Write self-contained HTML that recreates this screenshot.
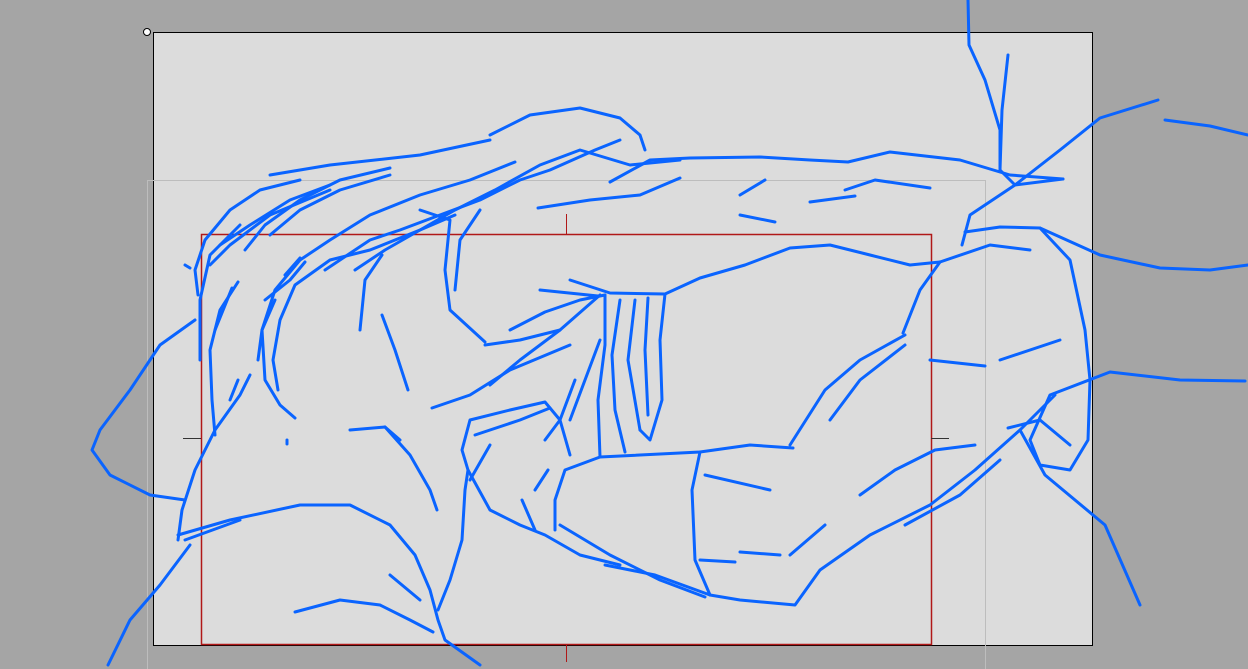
<!DOCTYPE html>
<html><head><meta charset="utf-8"><style>
html,body{margin:0;padding:0;width:1248px;height:669px;overflow:hidden;background:#a5a5a5;}
svg{display:block}
</style></head><body>
<svg width="1248" height="669" viewBox="0 0 1248 669" xmlns="http://www.w3.org/2000/svg">
<rect x="0" y="0" width="1248" height="669" fill="#a5a5a5"/>
<rect x="153.5" y="32.5" width="939" height="613" fill="#dcdcdc" stroke="#000" stroke-width="1"/>
<rect x="147.5" y="180.5" width="838" height="500" fill="none" stroke="#bdbdbd" stroke-width="1"/>
<rect x="201.5" y="234.5" width="730" height="410" fill="none" stroke="#b01818" stroke-width="1.5"/>
<g stroke="#b01818" stroke-width="1"><line x1="566.5" y1="214" x2="566.5" y2="234"/><line x1="566.5" y1="644" x2="566.5" y2="662"/></g>
<g stroke="#333" stroke-width="1"><line x1="183" y1="438.5" x2="201" y2="438.5"/><line x1="931" y1="438.5" x2="949" y2="438.5"/></g>
<circle cx="147" cy="32" r="3.5" fill="#fff" stroke="#000" stroke-width="1"/>
<g fill="none" stroke="#0a64ff" stroke-width="3" stroke-linecap="round" stroke-linejoin="round">
<path d="M968 0 L969 45 L985 80 L1000 130 L1000 170 L1015 185 L1063 179"/>
<path d="M1008 55 L1002 110 L1000 170"/>
<path d="M1158 100 L1100 118 L1060 150 L1015 185 L970 215 L962 245"/>
<path d="M1165 120 L1210 126 L1248 135"/>
<path d="M1040 228 L1100 255 L1160 268 L1210 270 L1248 265"/>
<path d="M965 232 L1000 227 L1040 228 L1070 260 L1085 330 L1090 380 L1088 440 L1070 470 L1040 465 L1030 440 L1050 395 L1110 372 L1180 380 L1245 381"/>
<path d="M1030 250 L990 245 L940 262 L910 265 L870 255 L830 245 L790 248 L745 265 L700 278 L665 294 L610 293 L570 280"/>
<path d="M940 262 L920 290 L903 333"/>
<path d="M1055 395 L1020 430 L1045 475 L1105 525 L1140 605"/>
<path d="M1040 420 L1008 428"/>
<path d="M1040 420 L1070 445"/>
<path d="M1060 340 L1000 360"/>
<path d="M930 360 L985 366"/>
<path d="M1020 430 L975 470 L930 505 L870 535 L820 570 L795 605 L740 600 L710 595 L655 575 L605 565"/>
<path d="M1000 460 L960 495 L905 525"/>
<path d="M975 445 L935 450 L895 470 L860 495"/>
<path d="M905 335 L860 360 L825 390 L790 445"/>
<path d="M905 345 L860 380 L830 420"/>
<path d="M793 448 L750 445 L700 452 L600 457 L565 470 L555 500 L555 530"/>
<path d="M700 452 L692 490 L695 560 L710 595"/>
<path d="M705 475 L770 490"/>
<path d="M825 525 L790 555"/>
<path d="M740 552 L780 555"/>
<path d="M700 560 L735 562"/>
<path d="M600 457 L598 400 L605 345 L605 295"/>
<path d="M620 300 L612 355 L615 410 L625 452"/>
<path d="M635 300 L628 360 L640 430"/>
<path d="M665 294 L660 340 L662 400 L650 440 L640 430"/>
<path d="M648 298 L645 350 L648 415"/>
<path d="M605 295 L580 300 L545 312 L510 330"/>
<path d="M600 295 L560 330 L520 360 L490 385"/>
<path d="M570 345 L510 370 L470 395 L432 408"/>
<path d="M600 340 L585 380 L570 420"/>
<path d="M575 380 L560 420 L545 440"/>
<path d="M540 290 L598 296"/>
<path d="M485 345 L520 340 L560 330"/>
<path d="M420 210 L450 220 L445 270 L450 310 L485 342"/>
<path d="M455 290 L460 240 L480 210"/>
<path d="M538 208 L590 200 L640 195 L680 178"/>
<path d="M610 182 L650 160 L690 158 L760 157 L810 160 L848 162 L890 152 L960 160 L1010 175 L1063 179"/>
<path d="M490 135 L530 115 L580 108 L620 118 L640 135 L645 150"/>
<path d="M270 175 L330 165 L420 155 L490 140"/>
<path d="M740 195 L765 180"/>
<path d="M740 215 L775 222"/>
<path d="M810 202 L855 196"/>
<path d="M845 190 L875 180 L930 188"/>
<path d="M620 140 L595 150 L550 170 L520 180 L480 200 L440 215 L400 230 L370 240 L325 270"/>
<path d="M680 160 L630 165 L580 150 L540 165 L495 190 L455 210 L420 230 L385 250 L355 270"/>
<path d="M515 162 L470 180 L420 195 L370 215 L330 240 L300 260 L275 290 L262 330 L265 380 L280 405 L295 418"/>
<path d="M455 215 L420 230 L370 250 L330 260 L295 285 L280 320 L273 360 L278 390"/>
<path d="M390 168 L340 180 L300 200 L265 225 L245 250"/>
<path d="M330 185 L290 200 L250 225 L220 245"/>
<path d="M390 175 L340 190 L300 210 L270 235"/>
<path d="M300 180 L260 190 L230 210 L205 240 L195 270 L198 295"/>
<path d="M330 190 L270 215 L230 245 L210 265"/>
<path d="M240 225 L210 255 L200 300 L200 360"/>
<path d="M238 282 L220 310 L210 350 L212 400 L215 435"/>
<path d="M232 288 L215 330"/>
<path d="M275 300 L262 330 L258 360"/>
<path d="M305 262 L290 280 L265 300"/>
<path d="M300 258 L285 275"/>
<path d="M238 380 L230 400"/>
<path d="M250 375 L240 395 L215 430 L195 470 L182 510 L178 540"/>
<path d="M195 320 L160 345 L130 390 L100 430 L92 450 L110 475 L150 495 L185 500"/>
<path d="M190 545 L160 585 L130 620 L108 665"/>
<path d="M178 535 L230 520 L300 505 L350 505 L390 525 L415 555 L430 590 L438 620 L445 640 L480 665"/>
<path d="M185 540 L240 520"/>
<path d="M295 612 L340 600 L380 605 L410 620 L433 632"/>
<path d="M390 575 L420 600"/>
<path d="M382 255 L365 280 L360 330"/>
<path d="M382 315 L395 350 L408 390"/>
<path d="M350 430 L385 427 L410 455 L430 490 L437 510"/>
<path d="M385 427 L400 440"/>
<path d="M438 610 L450 580 L462 540 L465 490 L468 470 L462 450 L470 420 L510 410 L545 402 L560 420 L570 455"/>
<path d="M475 435 L520 420 L550 408"/>
<path d="M468 470 L490 510 L520 525 L545 535 L580 555 L620 565"/>
<path d="M490 445 L470 480"/>
<path d="M522 500 L535 530"/>
<path d="M535 490 L548 470"/>
<path d="M560 525 L610 555 L660 580 L705 597"/>
<path d="M185 265 L190 268"/>
<path d="M287 440 L287 444"/>
</g>
</svg>
</body></html>
